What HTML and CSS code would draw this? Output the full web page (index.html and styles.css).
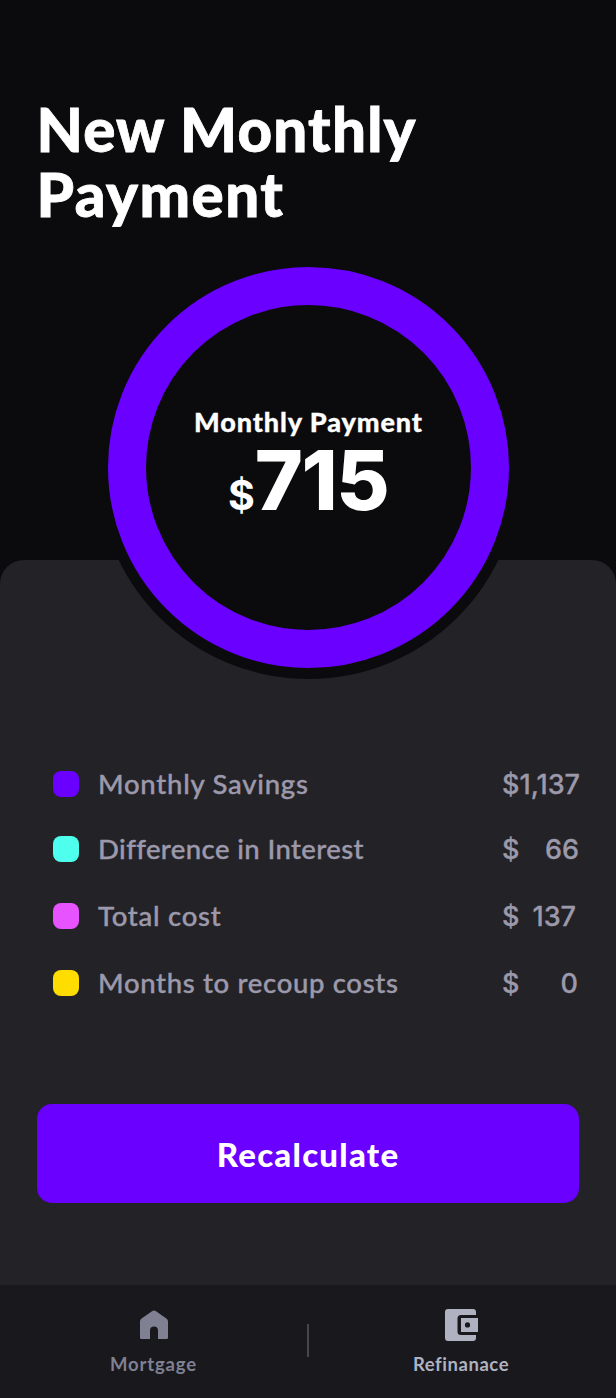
FILE: index.html
```html
<!DOCTYPE html>
<html lang="en">
<head>
<meta charset="utf-8">
<title>New Monthly Payment</title>
<link rel="stylesheet" href="styles.css">
</head>
<body>
<div class="screen">
  <h1 class="title"><span class="t1">New Monthly</span><br><span class="t2">Payment</span></h1>
  <section class="dial">
    <svg class="ring" viewBox="0 0 424 424" aria-hidden="true">
      <circle cx="212.5" cy="212" r="211" fill="#0b0b0d"/>
      <circle cx="212.5" cy="211.5" r="181.5" fill="none" stroke="#6a00ff" stroke-width="38"/>
    </svg>
    <div class="reading">
      <div class="caption">Monthly Payment</div>
      <div class="total"><span class="currency">$</span><span class="amount">715</span></div>
    </div>
  </section>
  <main class="panel">
    <ul class="legend">
      <li class="row r1"><i class="swatch savings"></i><span class="label l1">Monthly Savings</span><span class="value v1"><span>$</span><span>1,137</span></span></li>
      <li class="row r2"><i class="swatch interest"></i><span class="label l2">Difference in Interest</span><span class="value v2"><span>$</span><span>66</span></span></li>
      <li class="row r3"><i class="swatch cost"></i><span class="label l3">Total cost</span><span class="value v3"><span>$</span><span>137</span></span></li>
      <li class="row r4"><i class="swatch months"></i><span class="label l4">Months to recoup costs</span><span class="value v4"><span>$</span><span>0</span></span></li>
    </ul>
    <button class="action">Recalculate</button>
  </main>
  <nav class="tabs">
    <a class="tab mortgage">
      <svg viewBox="0 0 30 32" width="30" height="32"><path d="M1 12.500Q1 10.500 2.600 9.400L13 2.200Q15 0.900 17 2.200L27.400 9.400Q29 10.500 29 12.500V28.700Q29 30 27.700 30H19V21.500Q19 17.500 15 17.500T11 21.500V30H2.300Q1 30 1 28.700Z" fill="#7f8193"/></svg>
      <span>Mortgage</span>
    </a>
    <span class="divider"></span>
    <a class="tab refinance">
      <svg viewBox="0 0 34 32" width="34" height="32"><path d="M3 0H28Q31 0 31 3V6H16Q12.500 6 12.500 9.500V22.500Q12.500 26 16 26H31V29Q31 32 28 32H3Q0 32 0 29V3Q0 0 3 0Z" fill="#aeb2c1"/><path fill-rule="evenodd" d="M16 9H33V23H16ZM22.500 13.300A2.600 2.600 0 1 0 22.500 18.500A2.600 2.600 0 1 0 22.500 13.300Z" fill="#aeb2c1"/></svg>
      <span>Refinanace</span>
    </a>
  </nav>
</div>
</body>
</html>
```
FILE: styles.css
```css
* { box-sizing: border-box; }
body { margin: 0; background: #0b0b0d; font-family: Lato, "Open Sans", sans-serif; }
.screen { width: 616px; height: 1398px; display: flex; flex-direction: column; background: #0b0b0d; overflow: hidden; }
.title { margin: 0; padding: 97px 0 0 36.500px; height: 256px; font-size: 60px; line-height: 65px; font-weight: 900; color: #fff; white-space: nowrap; -webkit-text-stroke: 0.800px #fff; }
.t1 { letter-spacing: 1.200px; }
.t2 { letter-spacing: 1.500px; }
.dial { position: relative; z-index: 1; width: 424px; height: 424px; margin: 0 0 -120px 96px; display: grid; flex: none; }
.ring, .reading { grid-area: 1 / 1; }
.ring { width: 424px; height: 424px; }
.reading { color: #fff; padding-top: 148px; text-align: center; }
.caption { font-size: 27px; line-height: 36px; font-weight: 900; letter-spacing: 0.900px; padding-left: 1px; -webkit-text-stroke: 0.300px #fff; }
.total { display: flex; justify-content: center; align-items: baseline; font-family: Inter, sans-serif; font-weight: 700; line-height: 81px; }
.currency { font-size: 41px; }
.amount { font-size: 82px; font-weight: 800; letter-spacing: -1.500px; }
.panel { flex: none; height: 725px; background: #232227; border-radius: 24px 24px 0 0; padding: 191px 37px 0; }
.legend { list-style: none; margin: 0; padding: 0 0 0 16px; }
.row { display: flex; align-items: center; }
.r1 { height: 66px; }
.r2 { height: 64px; }
.r3 { height: 70px; }
.r4 { height: 64px; }
.swatch { width: 26px; height: 26px; border-radius: 8px; margin-right: 19px; }
.savings { background: #6a00ff; }
.interest { background: #4effed; }
.cost { background: #e653ff; }
.months { background: #ffdd00; }
.label { font-size: 27.500px; font-weight: 500; color: #9c99ab; white-space: nowrap; padding-bottom: 1px; -webkit-text-stroke: 0.400px #9c99ab; }
.l1 { letter-spacing: 0.750px; }
.l2 { letter-spacing: 0.400px; }
.l3 { letter-spacing: 0.750px; }
.l4 { letter-spacing: 0.680px; }
.value { margin-left: auto; width: 77px; display: flex; justify-content: space-between; font-family: Inter, sans-serif; font-size: 27px; font-weight: 500; color: #9c99ab; -webkit-text-stroke: 0.300px #9c99ab; }
.v3 { padding-right: 3px; }
.v4 { padding-right: 1px; }
.action { display: block; width: 542px; height: 99px; margin-top: 89px; padding: 0; border: 0; border-radius: 15px; background: #6a00ff; color: #fff; font: 900 33px Lato, sans-serif; letter-spacing: 1.250px; }
.tabs { flex: none; height: 113px; background: #19181d; display: flex; align-items: center; justify-content: center; }
.tab { width: 306px; height: 113px; padding-top: 24px; display: flex; flex-direction: column; align-items: center; gap: 12px; font-size: 18.500px; font-weight: 700; }
.tab svg { display: block; }
.mortgage { color: #7f8193; letter-spacing: 0.850px; padding-right: 1px; }
.refinance { color: #aeb2c1; letter-spacing: 0.550px; }
.refinance span { margin-right: 2px; }
.divider { width: 2px; height: 33px; margin-bottom: 2px; background: #47464b; }
```
